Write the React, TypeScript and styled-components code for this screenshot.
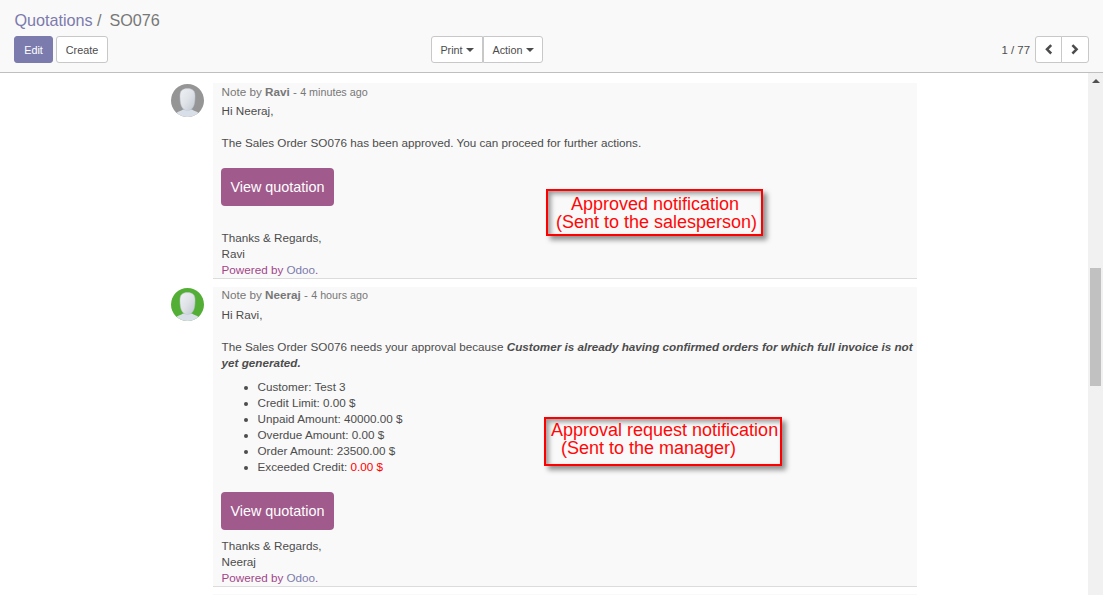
import React from 'react';
import styled, { createGlobalStyle } from 'styled-components';

const GlobalStyle = createGlobalStyle`
  * { box-sizing: border-box; }
  html, body { margin: 0; padding: 0; }
  body {
    background: #fff;
    color: #4c4c4c;
    font-family: 'Liberation Sans', Arial, sans-serif;
    font-size: 11.7px;
    line-height: 16px;
    overflow: hidden;
  }
`;

const Page = styled.div`
  display: flex;
  flex-direction: column;
  width: 1103px;
  height: 595px;
  overflow: hidden;
`;

const ControlPanel = styled.header`
  flex: none;
  height: 73px;
  padding: 9px 14px 0;
  background: #f9f9f9;
  border-bottom: 1px solid #bfbfbf;
`;

const Breadcrumb = styled.nav`
  display: flex;
  height: 27px;
  padding-left: 0.4px;
  font-size: 16.2px;
  line-height: 22px;
  color: #777;
`;

const Crumb = styled.a`
  color: #7c7bad;
`;

const Separator = styled.span`
  margin: 0 7.8px 0 4.4px;
`;

const Toolbar = styled.div`
  display: grid;
  grid-template-columns: 417px 1fr auto;
`;

const ButtonRow = styled.div<{ $gap?: number }>`
  display: flex;
  align-items: center;
  gap: ${(p) => p.$gap ?? 0}px;
`;

const Button = styled.button<{
  $width: number;
  $primary?: boolean;
  $side?: 'left' | 'right';
  $joined?: boolean;
}>`
  display: flex;
  align-items: center;
  justify-content: center;
  gap: 3px;
  flex: none;
  width: ${(p) => p.$width}px;
  height: 27px;
  padding: 0;
  font-family: inherit;
  font-size: 10.8px;
  line-height: 16px;
  color: ${(p) => (p.$primary ? '#fff' : '#4c4c4c')};
  background: ${(p) => (p.$primary ? '#7c7bad' : '#fff')};
  border: 1px solid ${(p) => (p.$primary ? '#7c7bad' : '#c8c8c8')};
  border-radius: ${(p) =>
    p.$side === 'left' ? '3px 0 0 3px' : p.$side === 'right' ? '0 3px 3px 0' : '3px'};
  margin-left: ${(p) => (p.$joined ? '-1px' : '0')};
`;

const Caret = styled.span`
  border: 4px solid transparent;
  border-top-color: currentColor;
  border-bottom: 0;
  margin-top: 1px;
`;

const Counter = styled.span`
  margin-right: 5px;
  font-size: 11.4px;
`;

const Content = styled.main`
  display: flex;
  flex: 1;
  min-height: 0;
`;

const Thread = styled.section`
  display: flex;
  flex-direction: column;
  flex: 1;
  padding: 10px 0 0 171px;
  overflow: hidden;
`;

const MessageRow = styled.article<{ $after?: number }>`
  display: flex;
  flex: none;
  gap: 9px;
  margin-bottom: ${(p) => p.$after ?? 0}px;
`;

const AvatarSlot = styled.div<{ $top: number }>`
  width: 33px;
  height: 33px;
  margin-top: ${(p) => p.$top}px;
`;

const Card = styled.div<{ $height: number; $top: number }>`
  position: relative;
  width: 704px;
  height: ${(p) => p.$height}px;
  padding: ${(p) => p.$top}px 0 0 8.5px;
  background: #f9f9f9;
  border-bottom: 1px solid #dcdcdc;
`;

const Meta = styled.div<{ $gap: number }>`
  height: 16px;
  margin-bottom: ${(p) => p.$gap}px;
  color: #777;
`;

const Author = styled.strong`
  font-weight: 700;
`;

const Age = styled.span`
  font-size: 10.75px;
`;

const Line = styled.p<{ $gap?: number }>`
  margin: 0 0 ${(p) => p.$gap ?? 0}px;
  white-space: nowrap;
`;

const Reason = styled.em`
  font-weight: 700;
  font-style: italic;
`;

const Facts = styled.ul`
  margin: 8px 0 17px;
  padding: 0 0 0 36px;
`;

const Amount = styled.span`
  color: #f00;
`;

const ViewButton = styled.a<{ $gap: number }>`
  display: flex;
  align-items: center;
  justify-content: center;
  width: 113px;
  height: 38px;
  margin: 0 0 ${(p) => p.$gap}px -0.5px;
  font-size: 14.4px;
  color: #fff;
  background: #a05a8c;
  border-radius: 4px;
`;

const Powered = styled.p`
  margin: 0;
  color: #a24689;
`;

const Callout = styled.div<{ $x: number; $y: number; $w: number; $h: number; $top: number }>`
  position: absolute;
  left: ${(p) => p.$x}px;
  top: ${(p) => p.$y}px;
  width: ${(p) => p.$w}px;
  height: ${(p) => p.$h}px;
  padding-top: ${(p) => p.$top}px;
  font-size: 18px;
  line-height: 18px;
  color: #ff0808;
  white-space: nowrap;

  &::before {
    content: '';
    position: absolute;
    inset: 0;
    border: 2px solid #f00;
    box-shadow:
      4px 4px 5px rgba(0, 0, 0, 0.42),
      inset 3px 3px 5px rgba(0, 0, 0, 0.38);
  }
`;

const CalloutLine = styled.div<{ $indent: number }>`
  position: relative;
  padding-left: ${(p) => p.$indent}px;
`;

const Scrollbar = styled.aside`
  display: flex;
  flex-direction: column;
  align-items: center;
  width: 15px;
  background: #f1f1f1;
`;

const ScrollUp = styled.span`
  margin-top: 6px;
  border: 4px solid transparent;
  border-top: 0;
  border-bottom-color: #505050;
`;

const Thumb = styled.div`
  width: 11px;
  height: 118px;
  margin-top: 185px;
  background: #c1c1c1;
`;

function Avatar({ id, color }: { id: string; color: string }) {
  return (
    <svg width="33" height="33" viewBox="0 0 33 33">
      <defs>
        <clipPath id={`${id}-clip`}>
          <circle cx="16.5" cy="16.5" r="16.5" />
        </clipPath>
        <linearGradient id={`${id}-face`} x1="0" y1="0" x2="1" y2="1">
          <stop offset="0" stopColor="#eef0f3" />
          <stop offset="0.5" stopColor="#dfe3e8" />
          <stop offset="1" stopColor="#c0c7d1" />
        </linearGradient>
      </defs>
      <g clipPath={`url(#${id}-clip)`}>
        <rect width="33" height="33" fill={color} />
        <path d="M3 31.5C5 27.6 9.5 27.8 12 25.6H21C23.5 27.8 28 27.6 30 31.5V33H3Z" fill="#d9dfe8" />
        <path
          d="M16.5 4.6C21.4 4.6 24 6.8 24 12C24 16 23.7 19 22.8 21.5C21.6 24.7 19.2 26.6 16.5 26.6C13.8 26.6 11.4 24.7 10.2 21.5C9.3 19 9 16 9 12C9 6.8 11.6 4.6 16.5 4.6Z"
          fill={`url(#${id}-face)`}
          stroke="#c3c9d2"
          strokeWidth="0.5"
        />
      </g>
    </svg>
  );
}

function Chevron({ dir }: { dir: 'left' | 'right' }) {
  return (
    <svg width="10" height="12" viewBox="0 0 10 12">
      <path
        d={dir === 'left' ? 'M7.2 1.1L3 5.3L7.2 9.5' : 'M2.4 1.1L6.6 5.3L2.4 9.5'}
        fill="none"
        stroke="#4c4c4c"
        strokeWidth="2.5"
      />
    </svg>
  );
}

function PoweredBy() {
  return (
    <Powered>
      Powered by <Crumb>Odoo</Crumb>.
    </Powered>
  );
}

export default function App() {
  return (
    <Page>
      <GlobalStyle />
      <ControlPanel>
        <Breadcrumb>
          <Crumb>Quotations</Crumb>
          <Separator>/</Separator>
          <span>SO076</span>
        </Breadcrumb>
        <Toolbar>
          <ButtonRow $gap={3}>
            <Button $width={39} $primary>Edit</Button>
            <Button $width={52}>Create</Button>
          </ButtonRow>
          <ButtonRow>
            <Button $width={52} $side="left">Print<Caret /></Button>
            <Button $width={60} $side="right">Action<Caret /></Button>
          </ButtonRow>
          <ButtonRow>
            <Counter>1 / 77</Counter>
            <Button $width={27} $side="left" aria-label="Previous"><Chevron dir="left" /></Button>
            <Button $width={28} $side="right" $joined aria-label="Next"><Chevron dir="right" /></Button>
          </ButtonRow>
        </Toolbar>
      </ControlPanel>
      <Content>
        <Thread>
          <MessageRow $after={8}>
            <AvatarSlot $top={1}><Avatar id="ravi" color="#959595" /></AvatarSlot>
            <Card $height={196} $top={1}>
              <Meta $gap={3}>Note by <Author>Ravi</Author> - <Age>4 minutes ago</Age></Meta>
              <Line $gap={16}>Hi Neeraj,</Line>
              <Line $gap={17}>
                The Sales Order SO076 has been approved. You can proceed for further actions.
              </Line>
              <ViewButton $gap={24}>View quotation</ViewButton>
              <Line>Thanks &amp; Regards,</Line>
              <Line>Ravi</Line>
              <PoweredBy />
              <Callout $x={333} $y={106} $w={217} $h={47} $top={6}>
                <CalloutLine $indent={25}>Approved notification</CalloutLine>
                <CalloutLine $indent={10}>(Sent to the salesperson)</CalloutLine>
              </Callout>
            </Card>
          </MessageRow>
          <MessageRow $after={7}>
            <AvatarSlot $top={1}><Avatar id="neeraj" color="#53ae35" /></AvatarSlot>
            <Card $height={300} $top={0}>
              <Meta $gap={4}>Note by <Author>Neeraj</Author> - <Age>4 hours ago</Age></Meta>
              <Line $gap={16}>Hi Ravi,</Line>
              <Line>
                The Sales Order SO076 needs your approval because{' '}
                <Reason>
                  Customer is already having confirmed orders for which full invoice is not
                  <br />
                  yet generated.
                </Reason>
              </Line>
              <Facts>
                <li>Customer: Test 3</li>
                <li>Credit Limit: 0.00 $</li>
                <li>Unpaid Amount: 40000.00 $</li>
                <li>Overdue Amount: 0.00 $</li>
                <li>Order Amount: 23500.00 $</li>
                <li>Exceeded Credit: <Amount>0.00 $</Amount></li>
              </Facts>
              <ViewButton $gap={8}>View quotation</ViewButton>
              <Line>Thanks &amp; Regards,</Line>
              <Line>Neeraj</Line>
              <PoweredBy />
              <Callout $x={331} $y={130} $w={238} $h={49} $top={4}>
                <CalloutLine $indent={7}>Approval request notification</CalloutLine>
                <CalloutLine $indent={17}>(Sent to the manager)</CalloutLine>
              </Callout>
            </Card>
          </MessageRow>
          <MessageRow>
            <AvatarSlot $top={1} />
            <Card $height={40} $top={0} />
          </MessageRow>
        </Thread>
        <Scrollbar>
          <ScrollUp />
          <Thumb />
        </Scrollbar>
      </Content>
    </Page>
  );
}
